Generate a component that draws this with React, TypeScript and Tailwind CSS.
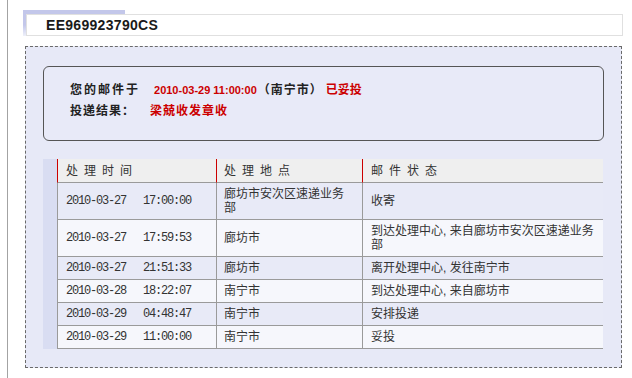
import React from 'react';

const rows = [
  {date: '2010-03-27', time: '17:00:00', place: ['廊坊市安次区速递业务', '部'], status: ['收寄']},
  {date: '2010-03-27', time: '17:59:53', place: ['廊坊市'], status: ['到达处理中心, 来自廊坊市安次区速递业务', '部']},
  {date: '2010-03-27', time: '21:51:33', place: ['廊坊市'], status: ['离开处理中心, 发往南宁市']},
  {date: '2010-03-28', time: '18:22:07', place: ['南宁市'], status: ['到达处理中心, 来自廊坊市']},
  {date: '2010-03-29', time: '04:48:47', place: ['南宁市'], status: ['安排投递']},
  {date: '2010-03-29', time: '11:00:00', place: ['南宁市'], status: ['妥投']},
];

const cjk = "font-['Liberation_Sans','Noto_Sans_CJK_SC',sans-serif]";

function Lines({lines}: {lines: string[]}) {
  return (
    <div className="whitespace-nowrap">
      {lines.map((l, i) => (
        <div key={i}>{l}</div>
      ))}
    </div>
  );
}

export default function App() {
  return (
    <div className={`w-[632px] h-[378px] bg-white pl-[7px] text-[#222] ${cjk}`}>
      <div className="h-full border-l border-[#a3a3a3] pt-[10px]">
        {/* tracking number tab */}
        <div className="ml-[15px] w-[600px]">
          <div className="h-[4px] w-[102px] bg-[#c3c7ea]" />
          <div className="flex h-[22px]">
            <div className="w-[3px] bg-gradient-to-b from-[#c3c7ea] via-[#c3c7ea] to-[#eef0fa]" />
            <div className="flex-1 flex items-center border border-[#e0e0e0] bg-white pl-[19px] text-[14px] font-bold tracking-[0.3px] text-[#1a1a1a] font-['Liberation_Sans',sans-serif]">
              EE969923790CS
            </div>
          </div>
        </div>

        {/* result panel */}
        <div className="ml-[17px] mt-[10px] w-[597px] h-[322px] border border-dashed border-[#6a6a6a] bg-[#e7e9f7] px-[17px] pt-[19px]">
          <div className="h-[75px] rounded-[6px] border border-[#555] bg-[#e8eaf8] pl-[26px] pt-[13px] text-[12px] font-bold leading-[21px]">
            <div className="flex items-center">
              <span className="tracking-[2px]">您的邮件于</span>
              <span className="ml-[14px] text-[11px] text-[#cc0000] font-['Liberation_Sans',sans-serif]">2010-03-29 11:00:00</span>
              <span className="ml-[1px] tracking-[1px]">（南宁市）</span>
              <span className="ml-[3px] text-[#cc0000]">已妥投</span>
            </div>
            <div className="flex items-center">
              <span className="tracking-[1px]">投递结果：</span>
              <span className="ml-[15px] tracking-[1px] text-[#cc0000]">梁兢收发章收</span>
            </div>
          </div>

          <div className="mt-[18px] flex">
            <div className="w-[14px] bg-[#d9ddf2]" />
            <div className="grid grid-cols-[159px_146px_241px] text-[12px] text-[#333]">
              <div className="h-[24px] flex items-center border-l border-l-[#cc0000] border-b border-b-[#9a9a9a] bg-[#efefef] pl-[8px] tracking-[6px]">处理时间</div>
              <div className="h-[24px] flex items-center border-l border-l-[#cc0000] border-b border-b-[#9a9a9a] bg-[#efefef] pl-[7px] tracking-[6px]">处理地点</div>
              <div className="h-[24px] flex items-center border-l border-l-[#cc0000] border-b border-b-[#9a9a9a] bg-[#efefef] pl-[8px] tracking-[6px]">邮件状态</div>
              {rows.map((r, i) => {
                const bg = i % 2 === 0 ? 'bg-[#e8eaf7]' : 'bg-[#f6f7fc]';
                return (
                  <React.Fragment key={i}>
                    <div className={`flex items-center border-l border-b border-[#9a9a9a] py-1 pl-[8px] leading-[14px] ${bg}`}>
                      <span className="text-[12px] tracking-[-1.2px] font-['Liberation_Mono',monospace]">{r.date}</span>
                      <span className="ml-[17px] text-[12px] tracking-[-1.2px] font-['Liberation_Mono',monospace]">{r.time}</span>
                    </div>
                    <div className={`flex items-center border-l border-b border-[#9a9a9a] py-1 pl-[7px] leading-[14px] ${bg}`}>
                      <Lines lines={r.place} />
                    </div>
                    <div className={`flex items-center border-l border-b border-[#9a9a9a] py-1 pl-[8px] leading-[14px] ${bg}`}>
                      <Lines lines={r.status} />
                    </div>
                  </React.Fragment>
                );
              })}
            </div>
          </div>
        </div>
      </div>
    </div>
  );
}
